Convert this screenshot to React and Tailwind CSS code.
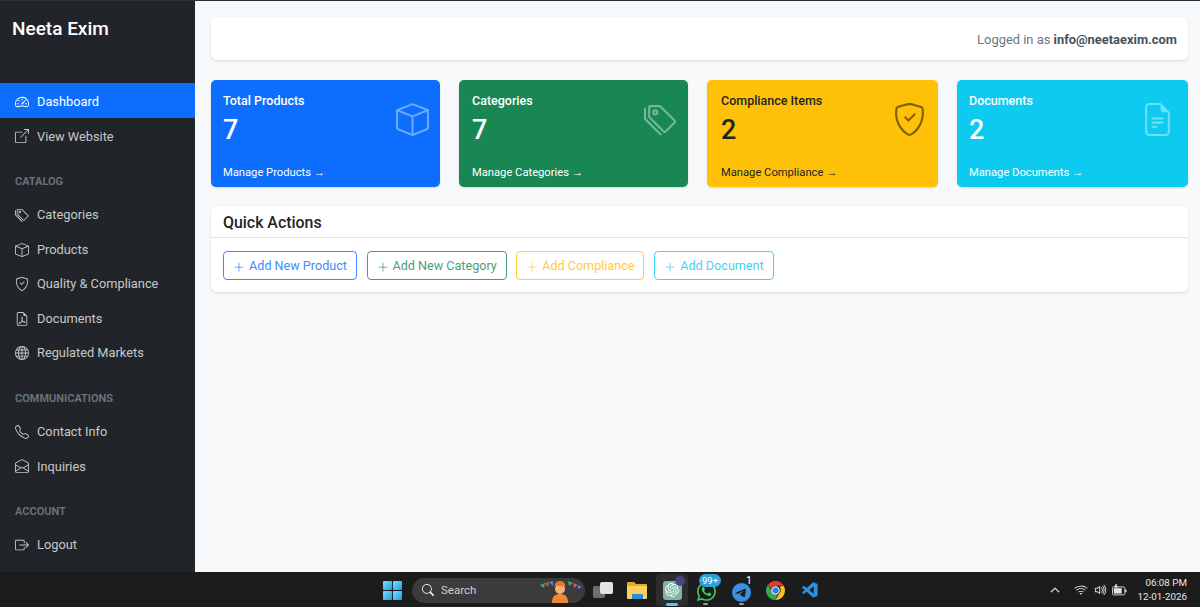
import React from 'react';
import {
  BsSpeedometer2, BsBoxArrowUpRight, BsTags, BsBox, BsShieldCheck, BsFileEarmarkPdf, BsGlobe,
  BsTelephone, BsEnvelopeOpen, BsBoxArrowRight, BsFileEarmarkText, BsPlusLg, BsSearch, BsWifi,
  BsVolumeUp, BsChevronUp, BsWhatsapp, BsTelegram,
} from 'react-icons/bs';
import { SiOpenai } from 'react-icons/si';
import { VscVscode } from 'react-icons/vsc';

const cards = [
  { title: 'Total Products', value: 7, link: 'Manage Products →', Icon: BsBox, box: 'bg-[#0d6efd] text-white w-[229px] pl-[12px]', icon: 'text-white/40 mr-[11px]' },
  { title: 'Categories', value: 7, link: 'Manage Categories →', Icon: BsTags, box: 'bg-[#198754] text-white w-[229px] pl-[13px]', icon: 'text-white/40 mr-[11px]' },
  { title: 'Compliance Items', value: 2, link: 'Manage Compliance →', Icon: BsShieldCheck, box: 'bg-[#ffc107] text-[#212529] w-[230.5px] pl-[14px]', icon: 'text-black/50 mr-[12px]' },
  { title: 'Documents', value: 2, link: 'Manage Documents →', Icon: BsFileEarmarkText, box: 'bg-[#0dcaf0] text-white w-[231.5px] pl-[12.5px]', icon: 'text-white/40 mr-[14px]' },
];

const actions = [
  { label: 'Add New Product', cls: 'text-[#0d6efd] border-[#0d6efd] w-[134px]' },
  { label: 'Add New Category', cls: 'text-[#198754] border-[#198754] w-[140px]' },
  { label: 'Add Compliance', cls: 'text-[#ffc107] border-[#ffc107] w-[128px]' },
  { label: 'Add Document', cls: 'text-[#0dcaf0] border-[#0dcaf0] w-[120px]' },
];

function NavItem({ Icon, label, active }) {
  return (
    <a className={active
      ? 'flex items-center h-[35px] pl-[15px] pt-[2px] text-white bg-[#0d6efd]'
      : 'flex items-center h-[34.5px] pl-[15px] pt-[2px] text-white/75'}>
      <Icon className="w-[14px] h-[14px] mr-[8px] shrink-0" />
      <span className="text-[12.8px]">{label}</span>
    </a>
  );
}

function SectionLabel({ children }) {
  return (
    <div className="mt-[20px] mb-[7.25px] h-[17px] pl-[15px] pt-[2px] flex items-center text-[11px] font-semibold text-[#6c757d]">
      {children}
    </div>
  );
}

function Sidebar() {
  return (
    <aside className="w-[195px] shrink-0 bg-[#212529] flex flex-col">
      <div className="h-[82px] pl-[12px] pt-[16px] text-[19px] leading-[24px] font-medium text-white">Neeta Exim</div>
      <NavItem Icon={BsSpeedometer2} label="Dashboard" active />
      <NavItem Icon={BsBoxArrowUpRight} label="View Website" />
      <SectionLabel>CATALOG</SectionLabel>
      <NavItem Icon={BsTags} label="Categories" />
      <NavItem Icon={BsBox} label="Products" />
      <NavItem Icon={BsShieldCheck} label="Quality & Compliance" />
      <NavItem Icon={BsFileEarmarkPdf} label="Documents" />
      <NavItem Icon={BsGlobe} label="Regulated Markets" />
      <SectionLabel>COMMUNICATIONS</SectionLabel>
      <NavItem Icon={BsTelephone} label="Contact Info" />
      <NavItem Icon={BsEnvelopeOpen} label="Inquiries" />
      <SectionLabel>ACCOUNT</SectionLabel>
      <NavItem Icon={BsBoxArrowRight} label="Logout" />
    </aside>
  );
}

function StatCard({ title, value, link, Icon, box, icon }) {
  return (
    <div className={`${box} h-[107px] rounded-[5px] flex flex-col shadow-sm`}>
      <div className="flex justify-between items-start">
        <div>
          <div className="mt-[12px] text-[12.5px] leading-[18px] font-medium">{title}</div>
          <div className="mt-[5px] text-[27px] leading-[30px] font-medium">{value}</div>
        </div>
        <Icon className={`${icon} w-[33px] h-[33px] mt-[23px]`} />
      </div>
      <div className="mt-auto mb-[6px] text-[11.2px] leading-[17px]">{link}</div>
    </div>
  );
}

function Main() {
  return (
    <main className="flex-1 bg-[#f8f9fa] pl-[16px] pr-[12px] pt-[16px]">
      <div className="h-[43px] bg-white rounded-[5px] shadow-sm flex items-center justify-end pr-[11px] pt-[2px] text-[12.9px] text-[#6c757d]">
        <span>Logged in as <b className="font-bold text-[#495057]">info@neetaexim.com</b></span>
      </div>
      <div className="mt-[20px] flex gap-[19px]">
        {cards.map((c) => <StatCard key={c.title} {...c} />)}
      </div>
      <section className="mt-[19px] h-[86px] bg-white rounded-[5px] shadow-sm">
        <div className="h-[32px] pl-[12px] pt-[2px] border-b border-[#dee2e6] flex items-center text-[15.9px] font-medium text-[#212529]">Quick Actions</div>
        <div className="pl-[12px] pt-[13px] flex gap-[9.67px]">
          {actions.map((a) => (
            <button key={a.label} className={`${a.cls} h-[29px] border rounded-[4px] pt-[2px] flex items-center justify-center text-[12.6px] opacity-80`}>
              <BsPlusLg className="w-[12px] h-[12px] mr-[4px]" />{a.label}
            </button>
          ))}
        </div>
      </section>
    </main>
  );
}

function WindowsLogo() {
  return (
    <svg viewBox="0 0 20 20" className="w-[19px] h-[19px]">
      <defs>
        <linearGradient id="win" x1="0" y1="0" x2="1" y2="1">
          <stop offset="0" stopColor="#7ee0fb" />
          <stop offset="1" stopColor="#1b9de2" />
        </linearGradient>
      </defs>
      <rect x="0" y="0" width="9.5" height="9.5" rx="1" fill="url(#win)" />
      <rect x="10.5" y="0" width="9.5" height="9.5" rx="1" fill="url(#win)" />
      <rect x="0" y="10.5" width="9.5" height="9.5" rx="1" fill="url(#win)" />
      <rect x="10.5" y="10.5" width="9.5" height="9.5" rx="1" fill="url(#win)" />
    </svg>
  );
}

function SearchArt() {
  return (
    <svg viewBox="0 0 44 26" className="w-[44px] h-[26px]">
      <path d="M1 7l5-2-1 5z" fill="#3fae5c" />
      <path d="M6 5l4-1-1 5z" fill="#d9534f" />
      <path d="M10 4l4-1 0 5z" fill="#4a8fd8" />
      <path d="M29 3l5 2-4 3z" fill="#3fae5c" />
      <path d="M34 5l5 2-4 3z" fill="#d9534f" />
      <path d="M39 7l4 2-4 2z" fill="#4a8fd8" />
      <circle cx="21" cy="11" r="5" fill="#f2b27a" />
      <path d="M15.500 9c0-4 2.500-6 5.500-6s5.500 2 5.500 6l-1.500-1h-8z" fill="#e8772e" />
      <path d="M13 25c0-7 3-9 8-9s8 2 8 9z" fill="#ee8a35" />
    </svg>
  );
}

function Folder() {
  return (
    <svg viewBox="0 0 20 18" className="w-[20px] h-[18px]">
      <path d="M0 2a1 1 0 0 1 1-1h6l2 2h10a1 1 0 0 1 1 1v3H0z" fill="#e9a825" />
      <rect x="0" y="5" width="20" height="13" rx="1" fill="#fcd05a" />
      <rect x="5" y="13" width="11" height="5" fill="#2b8fd6" />
    </svg>
  );
}

function Chrome() {
  return (
    <svg viewBox="0 0 20 20" className="w-[19px] h-[19px]">
      <path d="M10 0a10 10 0 0 1 8.660 5H10a5 5 0 0 0-4.700 3.300L2.100 3.900A10 10 0 0 1 10 0z" fill="#e33b2e" />
      <path d="M18.660 5A10 10 0 0 1 10 20l4.300-7.500A5 5 0 0 0 14 6z" fill="#fbc116" />
      <path d="M2.100 3.900l4.300 7.600A5 5 0 0 0 12 14.600L10 20A10 10 0 0 1 2.100 3.900z" fill="#2fa84f" />
      <circle cx="10" cy="10" r="3.900" fill="#2b7ff0" stroke="#fff" strokeWidth="1.100" />
    </svg>
  );
}

function Battery() {
  return (
    <svg viewBox="0 0 17 13" className="w-[15px] h-[12px]">
      <rect x="0.5" y="3" width="14" height="9" rx="1.500" fill="none" stroke="#e5e5e5" />
      <rect x="2" y="4.500" width="9" height="6" fill="#e5e5e5" />
      <rect x="15" y="6" width="1.500" height="3" fill="#e5e5e5" />
      <path d="M4 0l-1.500 3h2L3.500 6 7 2H5l1-2z" fill="#e5e5e5" />
    </svg>
  );
}

function Taskbar() {
  return (
    <footer className="relative h-[35px] shrink-0 bg-[#1c1c1c] pt-[1px] flex items-center text-[#e6e6e6]">
      <div className="ml-[383px] w-[19px] flex"><WindowsLogo /></div>
      <div className="ml-[10px] w-[173px] h-[25px] rounded-full bg-[#3b3b3b] flex items-center pl-[10px] relative">
        <BsSearch className="w-[12px] h-[12px] text-white" />
        <span className="ml-[7px] pt-[2px] text-[11.5px] text-[#d0d0d0]">Search</span>
        <span className="absolute right-[2px] top-0"><SearchArt /></span>
      </div>
      <div className="ml-[8px] w-[20px] h-[16px] relative">
        <span className="absolute left-0 bottom-0 w-[12px] h-[12px] rounded-[2px] bg-[#6e6e6e]" />
        <span className="absolute right-0 top-0 w-[13px] h-[12px] rounded-[2px] bg-[#e3e3e3]" />
      </div>
      <div className="ml-[14px] flex"><Folder /></div>
      <div className="ml-[9px] w-[32px] h-[32px] rounded-[4px] bg-[#2d2d2d] flex items-center justify-center relative">
        <span className="w-[19px] h-[19px] rounded-[3px] bg-[#7fb5a6] flex items-center justify-center">
          <SiOpenai className="w-[14px] h-[14px] text-white" />
        </span>
        <span className="absolute right-[3px] top-[2px] w-[10px] h-[10px] rounded-full bg-[#4a4488]" />
        <span className="absolute bottom-0 left-[10px] w-[12px] h-[3px] rounded-full bg-[#5cc4f0]" />
      </div>
      <div className="ml-[7px] w-[26px] h-[30px] relative">
        <BsWhatsapp className="absolute left-[2px] top-[7px] w-[19px] h-[19px] text-[#3fcf5f]" />
        <span className="absolute left-[4px] top-[-1px] w-[22px] h-[13px] rounded-full bg-[#2f9fd8] text-[9.5px] leading-[13px] text-center text-white">99+</span>
        <span className="absolute bottom-0 left-[8px] w-[5px] h-[2px] rounded-full bg-[#9a9a9a]" />
      </div>
      <div className="ml-[10px] w-[26px] h-[30px] relative">
        <BsTelegram className="absolute left-[1px] top-[8px] w-[19px] h-[19px] text-[#3a8fe0]" />
        <span className="absolute left-[15px] top-[0px] text-[10.5px] leading-[12px] text-white">1</span>
        <span className="absolute bottom-0 left-[8px] w-[5px] h-[2px] rounded-full bg-[#9a9a9a]" />
      </div>
      <div className="ml-[9px] flex"><Chrome /></div>
      <div className="ml-[16px] flex"><VscVscode className="w-[19px] h-[19px] text-[#2a8fe0]" /></div>

      <div className="ml-auto flex items-center">
        <BsChevronUp stroke="currentColor" strokeWidth="1" className="w-[10px] h-[10px] text-white" />
        <BsWifi className="ml-[14px] w-[14px] h-[14px]" />
        <BsVolumeUp className="ml-[6px] w-[14px] h-[14px]" />
        <span className="ml-[4px] flex"><Battery /></span>
        <div className="ml-[11px] mr-[13px] text-right text-[9.8px] leading-[14px]">
          <div>06:08 PM</div>
          <div>12-01-2026</div>
        </div>
      </div>
    </footer>
  );
}

export default function App() {
  return (
    <div className="w-[1200px] h-[607px] flex flex-col overflow-hidden font-['Roboto',sans-serif] border-t border-[#2b3035]">
      <div className="flex flex-1 min-h-0">
        <Sidebar />
        <Main />
      </div>
      <Taskbar />
    </div>
  );
}
